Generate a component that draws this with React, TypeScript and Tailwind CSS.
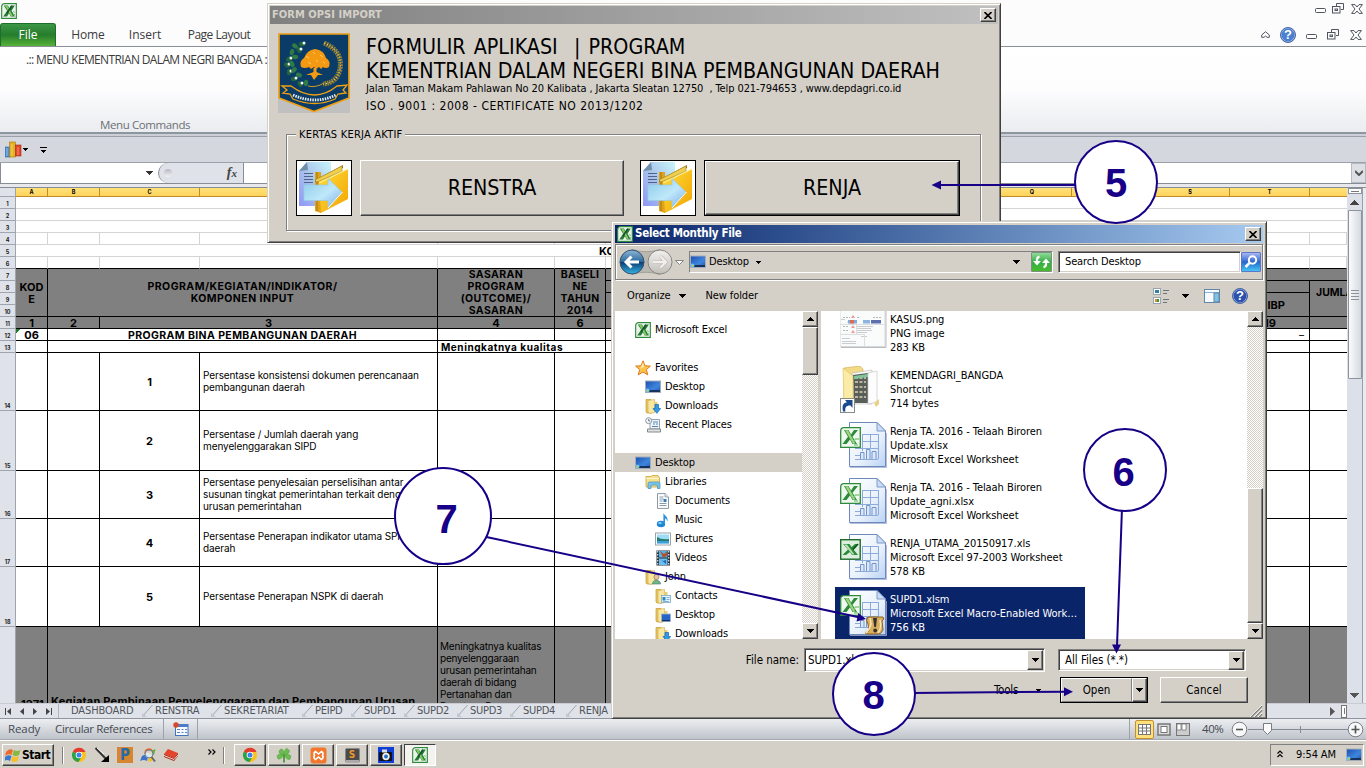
import React from "react";

const TA = "font-['DejaVu_Sans_Condensed','DejaVu_Sans',sans-serif] [font-stretch:condensed]";
const SEG = "font-['Open_Sans','Noto_Sans',sans-serif]";
const CELL = "border-r border-b border-black overflow-hidden";
const RAISED = "border border-t-white border-l-white border-r-[#404040] border-b-[#404040] shadow-[inset_-1px_-1px_0_#808080] bg-[#d4d0c8]";
const SUNKEN = "border border-t-[#808080] border-l-[#808080] border-r-white border-b-white shadow-[inset_1px_1px_0_#404040,inset_-1px_-1px_0_#d4d0c8] bg-white";
const CHECK = "bg-[repeating-conic-gradient(#ffffff_0_25%,#d4d0c8_0_50%)] bg-[length:2px_2px]";

function Tri({ dir = "down", w = 7, color = "#000", className = "" }: { dir?: "down" | "up" | "left" | "right"; w?: number; color?: string; className?: string }) {
  const h = Math.ceil(w / 2);
  if (dir === "down" || dir === "up")
    return (
      <svg width={w} height={h} className={`shrink-0 ${className}`} shapeRendering="crispEdges">
        <path d={dir === "down" ? `M0 0H${w}L${w / 2} ${h}Z` : `M0 ${h}H${w}L${w / 2} 0Z`} fill={color} />
      </svg>
    );
  return (
    <svg width={h} height={w} className={`shrink-0 ${className}`}>
      <path d={dir === "left" ? `M${h} 0V${w}L0 ${w / 2}Z` : `M0 0V${w}L${h} ${w / 2}Z`} fill={color} />
    </svg>
  );
}

function ExcelIcon({ size = 16 }: { size?: number }) {
  return (
    <svg width={size} height={size} viewBox="0 0 16 16" className="shrink-0">
      <path d="M3.500 .7H15.300V15.300H.7V3.500C.7 2 2 .7 3.500 .7Z" fill="#fff" stroke="#2f8a3c" strokeWidth="1.200" />
      <path d="M2 4.200C2 2.800 2.800 2 4.200 2H14V14H2Z" fill="#e9f4e7" />
      <path d="M2.800 2.500H7L8.500 5.500 10.200 2.500H13.800L10.500 7.800 14 13.500H9.700L8 10.200 6 13.500H2.200L6.200 7.800Z" fill="#27783a" />
      <path d="M4 2.800H6.600L12 13.200H9.900Z" fill="#86cb62" />
      <path d="M10.800 2.800L6 10" stroke="#12552a" strokeWidth="1.600" />
      <path d="M12 8.500l2 1M12.500 11.500h1.500" stroke="#7cc67a" />
    </svg>
  );
}

function DesktopIcon() {
  return (
    <svg width="16" height="16" viewBox="0 0 16 16" className="shrink-0">
      <defs>
        <linearGradient id="dsk" x1="0" y1="0" x2="1" y2="1">
          <stop offset="0" stopColor="#1b4fb0" />
          <stop offset=".6" stopColor="#3f86dd" />
          <stop offset="1" stopColor="#1d57b5" />
        </linearGradient>
      </defs>
      <rect x=".5" y="2" width="15" height="11.500" fill="url(#dsk)" stroke="#a3acb8" />
      <rect x="1" y="11" width="14" height="2" fill="#18325f" />
      <circle cx="2.500" cy="11.500" r="2" fill="#5ec5ee" />
      <rect x="2" y="11" width="1.500" height="1.500" fill="#f5b72a" />
    </svg>
  );
}

function FolderBase({ children }: { children?: React.ReactNode }) {
  return (
    <svg width="16" height="16" viewBox="0 0 16 16" className="shrink-0">
      <path d="M1 1.500H6L7 3V15H2L1 14Z" fill="#e9c865" stroke="#c49a36" strokeWidth=".7" />
      <path d="M3 2.500L9.500 1.500V14.500L5 15.500 3 14Z" fill="#f8e7a0" stroke="#d0a94a" strokeWidth=".6" />
      <path d="M10 4h2.500v10H10z" fill="#e8cc77" />
      {children}
    </svg>
  );
}

function TreeIcon({ kind }: { kind: string }) {
  if (kind === "excel") return <ExcelIcon />;
  if (kind === "desktop") return <DesktopIcon />;
  if (kind === "star")
    return (
      <svg width="16" height="16" viewBox="0 0 16 16" className="shrink-0">
        <path d="M8 .8L10 5.800 15.400 6.100 11.300 9.600 12.800 14.900 8 12 3.200 14.900 4.700 9.600 .6 6.100 6 5.800Z" fill="#fbc34a" stroke="#e07a1c" />
        <path d="M8 2.500L9.300 6.500 5 9Z" fill="#fdeba8" />
      </svg>
    );
  if (kind === "downloads")
    return (
      <FolderBase>
        <path d="M10 6.500h3.500V10.500H15.700L11.800 15.300 8 10.500H10Z" fill="#2f9be8" stroke="#1466b5" strokeWidth=".7" />
      </FolderBase>
    );
  if (kind === "dfolder")
    return (
      <FolderBase>
        <rect x="6.500" y="7" width="9" height="7.500" fill="#2563c4" stroke="#9eb4d0" strokeWidth=".8" />
        <path d="M7 13h8v1.200H7z" fill="#12305f" />
      </FolderBase>
    );
  if (kind === "contacts")
    return (
      <FolderBase>
        <rect x="6.500" y="7.500" width="9" height="7" fill="#e9f6ff" stroke="#79aac8" strokeWidth=".8" />
        <rect x="7.500" y="9" width="3" height="3.500" fill="#3187bd" />
        <path d="M11.500 9.500h3M11.500 11.500h3M8 13.500h6" stroke="#5ea0c8" strokeWidth=".8" />
      </FolderBase>
    );
  if (kind === "user")
    return (
      <FolderBase>
        <circle cx="11.500" cy="8" r="2.600" fill="#e6c3a0" stroke="#8d6b4d" strokeWidth=".6" />
        <path d="M7.500 15c0-5 8-5 8 0z" fill="#6fb58d" stroke="#3f7d60" strokeWidth=".6" />
      </FolderBase>
    );
  if (kind === "recent")
    return (
      <svg width="16" height="16" viewBox="0 0 16 16" className="shrink-0">
        <path d="M5 2.500H14.500V12H5Z" fill="#eef4f8" stroke="#8fa3b0" />
        <path d="M8 5h5M8 7h2M11 7h2M7 9.500h6" stroke="#5685b0" />
        <path d="M2.500 12H15.500V15H2.500Z" fill="#dfe3e6" stroke="#85898c" />
        <circle cx="3.700" cy="3.700" r="3" fill="#f5f8fa" stroke="#8a97a3" />
        <path d="M3.700 2v2h1.500" stroke="#557" fill="none" strokeWidth=".8" />
      </svg>
    );
  if (kind === "lib")
    return (
      <svg width="16" height="16" viewBox="0 0 16 16" className="shrink-0">
        <path d="M1 2.500H6L7 1.500H13L14.500 4V13H1Z" fill="#f4df8e" stroke="#c9a23e" strokeWidth=".8" />
        <path d="M1 4.500H14" stroke="#fff6cf" />
        <path d="M3 14.500V9.500Q3 8 4.500 8H13.500Q15 8 15 9.500V14.500H12.500V12Q12.500 11 11 11H7.500Q6 11 6 12V14.500Z" fill="#79c4ea" stroke="#3f8fc0" strokeWidth=".7" />
      </svg>
    );
  if (kind === "doc")
    return (
      <svg width="16" height="16" viewBox="0 0 16 16" className="shrink-0">
        <path d="M2.500 .6H10L13.500 4V15.400H2.500Z" fill="#fff" stroke="#8c97a2" />
        <path d="M10 .6V4H13.500" fill="#d9e6f2" stroke="#8c97a2" strokeWidth=".8" />
        <path d="M4.500 4h4M4.500 6h4M4.500 8h3M4.500 10.500h7M4.500 12.500h7" stroke="#8499ad" />
        <path d="M8.500 6h3v3h-3z" fill="#2f7cc0" />
      </svg>
    );
  if (kind === "music")
    return (
      <svg width="16" height="16" viewBox="0 0 16 16" className="shrink-0">
        <ellipse cx="6" cy="12" rx="4.200" ry="3.300" fill="#1f87d4" />
        <path d="M8.400 12V.8C9 4 14 4.500 12.300 10 12 6.500 10 6.500 10 6.500V12Z" fill="#2a93dd" />
        <ellipse cx="5" cy="11" rx="1.800" ry="1.100" fill="#8fd2fa" />
      </svg>
    );
  if (kind === "pic")
    return (
      <svg width="16" height="16" viewBox="0 0 16 16" className="shrink-0">
        <rect x=".5" y="2" width="15" height="12" fill="#fff" stroke="#98a2ac" />
        <rect x="2" y="3.500" width="12" height="9" fill="#9edbf5" />
        <path d="M2 6Q6 9 14 8V10H2Z" fill="#257a70" />
        <path d="M2 10H14V12.500H2Z" fill="#3c9fd8" />
      </svg>
    );
  return (
    <svg width="16" height="16" viewBox="0 0 16 16" className="shrink-0">
      <rect x="1.500" y=".5" width="13.500" height="15" fill="#2a3138" />
      <rect x="4" y="1" width="8.500" height="6.500" fill="#4eb4ea" />
      <rect x="4" y="8.500" width="8.500" height="6.500" fill="#68bff0" />
      <path d="M5 1l4 3 3-3v5l-4 1.500z" fill="#b9502a" />
      <path d="M5 9l3 2 3-1v4z" fill="#2667b1" />
      <path d="M2.700 1v14M13.700 1v14" stroke="#dfe5ea" strokeWidth="1.200" strokeDasharray="1.500 1.500" />
    </svg>
  );
}

function FileIcon({ kind }: { kind: string }) {
  if (kind === "png")
    return (
      <svg width="50" height="46" viewBox="0 0 50 46" className="shrink-0">
        <path d="M0 0H45V36.500H0Z" fill="#fafbfb" stroke="#d7d9db" />
        <path d="M1 37.500H46V1" fill="none" stroke="#b9bcbf" />
        <path d="M3 7.500h7M3 16.500h6M3 20.500h6M17 7.500h3M33 7.500h8" stroke="#b3b8c0" strokeDasharray="2 1" />
        <path d="M1 9.500h4M7 12h6M17 16.500h16M17 18.500h14M17 20.500h15M17 22.500h10M2 28.500h8M21 26.500h6M2 31.500h14M2 33.500h14" stroke="#c9ccd1" />
        <rect x="8" y="10" width="9" height="3.500" fill="#79aede" />
        <rect x="10" y="10" width="4" height="3.500" fill="#e4694c" />
        <rect x="23" y="10" width="7" height="3.500" fill="#8db4dc" />
        <rect x="31" y="10" width="10" height="3.500" fill="#5d6fae" />
        <path d="M11 8l2-3 2 3zM11 18l2-3 2 3zM11 23l2-3 2 3z" fill="#ef9a95" />
        <path d="M0 14.500H45M0 24.500H24M24.500 24V36M16.500 14V24" stroke="#dcdee0" />
      </svg>
    );
  if (kind === "shortcut")
    return (
      <svg width="50" height="50" viewBox="0 0 50 50" className="shrink-0">
        <path d="M4 2L20 0L23 3V32L4 36Z" fill="#f2da86" stroke="#d3b159" strokeWidth=".7" />
        <path d="M12 7L32 4V38H14Z" fill="#f6f6f4" stroke="#b9b9b4" strokeWidth=".6" />
        <path d="M13 9L28 7V37H14Z" fill="#575f58" />
        <path d="M15 12h11M15 16h11M15 21h11M15 26h11M15 31h11" stroke="#bfb3a0" strokeWidth="2.200" strokeDasharray="3 1.500" />
        <path d="M14 10L28 8V11L14 13Z" fill="#7fc59a" />
        <path d="M28 7L37 5V36L28 38Z" fill="#fdfdfd" stroke="#c7c9c9" strokeWidth=".7" />
        <path d="M34 37L39 33V38L36 41Z" fill="#ead086" />
        <path d="M3 2L13 10V46L4 38Z" fill="#faeba6" stroke="#dcbf68" strokeWidth=".6" />
        <rect x=".5" y="32.500" width="14" height="14" fill="#fff" stroke="#8a8a8a" />
        <path d="M3 45.500C1.500 38.500 4 36.500 7 36.500L5 34H12.500V42L10.500 39.500C7 39 4.500 41 5.500 45.500Z" fill="#1a4a8b" />
      </svg>
    );
  return (
    <svg width="50" height="50" viewBox="0 0 50 50" className="shrink-0">
      <defs>
        <linearGradient id="pg" x1="0" y1="0" x2="1" y2="1">
          <stop offset="0" stopColor="#ffffff" />
          <stop offset=".6" stopColor="#e8f0fb" />
          <stop offset="1" stopColor="#b9d2f4" />
        </linearGradient>
      </defs>
      <path d="M9.500 .5H37L45.500 9V44.500H9.500Z" fill="url(#pg)" stroke="#6f88bb" />
      <path d="M10 45.500H46.500V11" fill="none" stroke="#9fb0cf" strokeWidth=".8" />
      <path d="M37 .5V9H45.500Z" fill="#c9dcf5" stroke="#6f88bb" strokeWidth=".8" />
      <path d="M22 12.500H38M22 19.500H38M15 26.500H38M15 33.500H20M22.500 12V29M30.500 12V26M38.500 12V37M15 37.500H38" stroke="#8cabdb" fill="none" />
      <path d="M20.500 37V30.500H24V37M26.500 37V27.500H30V37M32 37V29.500H36V37" fill="#dbe8fa" stroke="#7294cc" />
      {kind === "xls" ? (
        <g>
          <rect x=".7" y="5.700" width="19.500" height="19.500" fill="#dcefdc" stroke="#1d6b2b" strokeWidth="1.400" />
          <path d="M3 10H9.500L11.500 13 15 10H18.500L13.500 15.500 18 21H12L10 18 6 21H2.500L8 15.500Z" fill="#2c8a3c" />
          <path d="M4 10.500L12.500 20.500H14.500L7 10.500Z" fill="#b9e0b2" />
          <path d="M18 10L13 15.500" stroke="#0f4c1c" strokeWidth="1.500" />
        </g>
      ) : (
        <g>
          <path d="M4 5.700H20.300V25.300H.7V9C.7 7 2 5.700 4 5.700Z" fill="#eff8ee" stroke="#2e8b3d" strokeWidth="1.300" />
          <path d="M4 8H8.500L11 12.500 14 8H18L12.500 14.800 17 22H12.500L10 17.500 6.500 22H2.500L8 14.800Z" fill="#2b8a3b" />
          <path d="M5 8.300H8L15.500 21.700H13Z" fill="#9dd47e" />
          <path d="M13.500 20l2-3h3.500M14 23h4" stroke="#88c987" strokeWidth="1.300" fill="none" />
        </g>
      )}
      {kind === "xlsm" && (
        <g>
          <path d="M28 27H43Q45 29 42 31L43 40Q41 45 37 44H26Q25 41 29 41L28 34Q25 30 28 27Z" fill="#d9ae60" stroke="#8e6424" />
          <path d="M26 43Q30 39 31 34L30 28M38 43Q42 38 40 30" stroke="#fbe7b2" strokeWidth="1.500" fill="none" />
          <path d="M33 28H37L36 37H34.300Z" fill="#35322e" />
          <circle cx="35.200" cy="40.500" r="1.900" fill="#35322e" />
        </g>
      )}
    </svg>
  );
}

function ImportPicture() {
  return (
    <div className="w-[56px] h-[56px] border border-black bg-white shrink-0">
      <svg width="54" height="54" viewBox="0 0 54 54">
        <defs>
          <linearGradient id="pa" x1="1" y1="0" x2="0" y2="1">
            <stop offset="0" stopColor="#c8f5fb" />
            <stop offset=".5" stopColor="#a9c4ec" />
            <stop offset="1" stopColor="#8f97f5" />
          </linearGradient>
          <linearGradient id="ar" x1="0" y1="0" x2="1" y2="1">
            <stop offset="0" stopColor="#8ccbe8" />
            <stop offset=".55" stopColor="#bfe8fa" />
            <stop offset="1" stopColor="#7cabe6" />
          </linearGradient>
          <linearGradient id="fo" x1="0" y1="0" x2="1" y2="1">
            <stop offset="0" stopColor="#ffdf3c" />
            <stop offset="1" stopColor="#f2a200" />
          </linearGradient>
        </defs>
        <path d="M10 1H34V45H2V10Z" fill="url(#pa)" />
        <path d="M2 10L10 1L11 9Z" fill="#6d8fa8" />
        <path d="M7 12.500H16M7 15.500H16M7 18.500H16M7 21.500H16" stroke="#4e6585" />
        <path d="M18 11H24V52L18 50Z" fill="#e0a21a" />
        <path d="M20 11V50" stroke="#a87608" />
        <path d="M22 20L51 8V38L24 52Z" fill="url(#fo)" />
        <path d="M18 19L46 4V7L18 21Z" fill="#8f7426" />
        <path d="M18 19L45 5V10L20 21Z" fill="#f0cf4d" stroke="#a98a2c" strokeWidth=".6" />
        <path d="M22 22L51 8" stroke="#fff1a0" strokeWidth="1" />
        <path d="M7 24H31V17.500L45 31 31 47V39.500H7Z" fill="url(#ar)" stroke="#97cbe8" strokeWidth=".7" />
        <path d="M31 47L45.500 31" stroke="#fff" strokeWidth=".9" />
      </svg>
    </div>
  );
}

const LEAVES = [[24, 11], [17, 13], [21, 17], [14, 19], [11, 26], [17, 24], [9, 32], [14, 31], [11, 39], [16, 37], [16, 46], [21, 42], [22, 51], [28, 50]];

function Logo() {
  return (
    <div className="w-[72px] h-[80px] bg-[#c0c0c0] shrink-0">
      <svg width="72" height="80" viewBox="0 0 72 80">
        <path d="M1 1H71V65L36 78.500L1 65Z" fill="#0b3c68" stroke="#f0a011" strokeWidth="1.700" />
        {LEAVES.map(([x, y], i) => (
          <g key={i}>
            <ellipse cx={x} cy={y} rx="3.200" ry="2.200" fill={i % 2 ? "#2f7a45" : "#24663c"} transform={`rotate(${i * 35} ${x} ${y})`} />
            {i % 2 === 0 && <circle cx={x + 2} cy={y - 1} r="1.500" fill="#f2f6f2" />}
          </g>
        ))}
        <path d="M46 10Q65 18 62 36Q59 50 45 51" fill="none" stroke="#94802f" strokeWidth="5" strokeDasharray="1.800 .8" />
        <path d="M46 10Q65 18 62 36Q59 50 45 51" fill="none" stroke="#e8cf78" strokeWidth="1.200" strokeDasharray="1 2" />
        <path d="M30 53Q38 55 46 50" fill="none" stroke="#c99a26" />
        <path d="M23 34Q21 28 26 25Q29 17 37 16Q46 17 48 25Q53 28 51 34Q48 36 45 34L43 36 41 34 38 36 36 34 33 36 31 34Q27 36 23 34Z" fill="#f49a12" />
        <path d="M28 23l3 2M35 19l2 2M42 22l3 2M30 29l3 2M38 27l2 2M45 29l2 1" stroke="#ffc862" strokeWidth="1" />
        <path d="M35.500 35V39L28 42 33 42 36 47 40 42 45 42 38.500 39V35Z" fill="#f49a12" />
        <path d="M4 53L13 53Q37 71 59 53L69 52 65 57 68 60 60 61 57 66Q37 75 15 66L12 61 5 60 9 57Z" fill="#0b3c68" stroke="#f0a011" strokeWidth="1.300" />
        <path d="M15 62Q37 72 58 62" fill="none" stroke="#e6ebf0" strokeWidth="2.800" strokeDasharray="1.500 1" />
      </svg>
    </div>
  );
}

function CloseBtn() {
  return (
    <div className={`${RAISED} w-[16px] h-[14px] flex items-center justify-center shrink-0`}>
      <svg width="8" height="7" viewBox="0 0 8 7">
        <path d="M.5 0L7.500 7M7.500 0L.5 7" stroke="#000" strokeWidth="1.600" />
      </svg>
    </div>
  );
}

function WinControls({ className }: { className: string }) {
  return (
    <div className={`flex items-center ${className}`}>
      <svg width="11" height="5" className="mt-[3px]"><rect x=".5" y=".5" width="10" height="4" rx="1" fill="#fff" stroke="#50545e" /></svg>
      <svg width="13" height="11" className="shrink-0" fill="none" stroke="#50545e">
        <path d="M4.500 3V.5H11.500V6.500H9" />
        <rect x=".5" y="3.500" width="7.500" height="6.500" />
        <rect x="3" y="6" width="2.500" height="1.500" />
      </svg>
      <svg width="12" height="10" className="shrink-0">
        <path d="M.6 .6H4L6 3 8 .6H11.400L8 5 11.400 9.400H8L6 7 4 9.400H.6L4 5Z" fill="#fff" stroke="#50545e" />
      </svg>
    </div>
  );
}

function Help({ dark = false }: { dark?: boolean }) {
  return (
    <div className={`${dark ? "bg-[#2c50ae]" : "bg-[#4a80cf]"} w-[16px] h-[16px] text-[13px] rounded-full border border-[#4a66a4] shadow-[inset_0_0_0_0.500px_#b9c9e6] text-white font-bold flex items-center justify-center leading-none font-['Liberation_Sans',sans-serif]`}>?</div>
  );
}

function TopBars() {
  return (
    <>
      <div className="h-[23px] bg-[#fcfcfc] flex items-start justify-between pl-[1px] pt-[3px]">
        <ExcelIcon size={16} />
        <WinControls className="gap-[6px] pr-[3px]" />
      </div>
      <div className={`h-[24px] bg-[#fcfcfc] border-b border-[#8b9097] flex text-[12px] text-[#3b3b3b] ${SEG}`}>
        <div className="w-[56px] h-[23px] rounded-t-[3px] border border-[#1f6d2b] border-b-0 bg-gradient-to-b from-[#3c9745] via-[#257c2c] to-[#56b337] text-white flex items-center justify-center">File</div>
        <div className="w-[64px] flex items-center justify-center tracking-[-0.1px]">Home</div>
        <div className="w-[50px] flex items-center justify-center">Insert</div>
        <div className="w-[98px] flex items-center justify-center tracking-[-0.500px]">Page Layout</div>
        <div className="flex-1 flex items-center justify-end gap-[10px] pr-[4px]">
          <svg width="9" height="7"><path d="M.7 4L4.500 .7 8.300 4V6.300H6L4.500 5 3 6.300H.7Z" fill="#fff" stroke="#50545e" /></svg>
          <Help />
          <WinControls className="gap-[10px]" />
        </div>
      </div>
      <div className={`h-[85px] bg-gradient-to-b from-white via-[#fdfdfe] to-[#eaecef] flex flex-col justify-between ${SEG} text-[12px]`}>
        <div className="pl-[26px] pt-[4px] leading-[18px] text-[#3b3b3b] whitespace-nowrap tracking-[-0.640px]">.:: MENU KEMENTRIAN DALAM NEGRI BANGDA :</div>
        <div className="pl-[100px] leading-[15px] text-[11.500px] tracking-[-0.400px] text-[#6c7077]">Menu Commands</div>
      </div>
      <div className="h-[5px] bg-[#ccd0d6] border-t-2 border-b border-t-[#8c969f] border-b-[#9aa0aa]" />
      <div className="h-[25px] bg-[#d4d7dd] flex items-center pl-[5px]">
        <svg width="17" height="17" viewBox="0 0 17 17">
          <rect x="0" y="6" width="5" height="10" fill="#4b8ed6" stroke="#2c65a8" strokeWidth=".6" />
          <rect x="4.500" y="1" width="6" height="15" fill="#e3b11f" stroke="#a67a10" strokeWidth=".6" />
          <rect x="10.500" y="4" width="5.500" height="11" fill="#e4482a" stroke="#a52b14" strokeWidth=".6" />
          <path d="M2 7v8M7 3v12M13 6v8" stroke="#fff" strokeOpacity=".4" />
        </svg>
        <Tri w={5} className="ml-[1px]" />
        <div className="ml-[12px] flex flex-col items-center gap-[2px]">
          <div className="w-[7px] h-px bg-black" />
          <Tri w={5} />
        </div>
      </div>
      <div className="h-[22px] bg-white border-t border-b border-t-[#9aa1ab] border-b-[#868d97] flex">
        <div className="w-[158px] border-l border-[#868d97] flex items-center justify-end pr-[5px]"><Tri w={7} color="#333" /></div>
        <div className="w-[86px] bg-[#dfe2e8] rounded-l-[11px] border-l border-r border-[#868d97] flex items-center justify-between pl-[5px] pr-[6px]">
          <div className="w-[8px] h-[8px] rounded-full bg-gradient-to-b from-[#b5b9c0] to-[#f2f3f5]" />
          <span className="font-['Liberation_Serif',serif] italic font-bold text-[14px] leading-none text-[#444]">f<span className="text-[11px]">x</span></span>
        </div>
        <div className="flex-1" />
        <div className="w-[15px] bg-[#dcdfe4] border border-[#b5bac2] flex items-center justify-center">
          <svg width="8" height="6"><path d="M0 1L4 5 8 1" stroke="#555" strokeWidth="2" fill="none" /></svg>
        </div>
      </div>
      <div className="h-[4px] bg-[#e7e9ed] border-b border-[#868d97]" />
    </>
  );
}

const NUMS = [
  "row-start-2", "row-start-3", "row-start-4", "row-start-5", "row-start-6", "row-start-7", "row-start-8", "row-start-9", "row-start-10", "row-start-11",
  "row-start-12", "row-start-13", "row-start-14", "row-start-15", "row-start-16", "row-start-17", "row-start-18", "row-start-19",
];
const COLS = ["col-start-2", "col-start-3", "col-start-4", "col-start-5", "col-start-6", "col-start-7", "col-start-8", "col-start-9"];
const ITEMS = [
  { row: "row-start-15", n: "1", t: ["Persentase konsistensi dokumen perencanaan", "pembangunan daerah"] },
  { row: "row-start-16", n: "2", t: ["Persentase / Jumlah daerah yang", "menyelenggarakan SIPD"] },
  { row: "row-start-17", n: "3", t: ["Persentase penyelesaian perselisihan antar", "susunan tingkat pemerintahan terkait dengan", "urusan pemerintahan"] },
  { row: "row-start-18", n: "4", t: ["Persentase Penerapan indikator utama SPM", "daerah"] },
  { row: "row-start-19", n: "5", t: ["Persentase Penerapan NSPK di daerah"] },
];
const G = "bg-[#808080] flex items-center justify-center text-center";
const GL = "border-[#d4d4d4] border-b";
const HEAD = "row-start-1 bg-gradient-to-b from-[#ffe27a] to-[#ffd35a] border-b border-[#c08a2e]";

function Sheet() {
  return (
    <div className="h-[515px] flex bg-[#dfe2e8]">
      <div className="w-[1347px] overflow-hidden grid bg-white text-black text-[10px] leading-[12px] font-['Inter',sans-serif] grid-cols-[16px_32px_52px_100px_238px_117px_51px_704px_37px] grid-rows-[9px_12px_12px_12px_12px_12px_12px_12px_12px_12px_12px_12px_12px_12px_58px_60px_48px_48px_60px_76px]">
        <div className="bg-[#dfe2e8] border-r border-b border-[#9fa5ae]" />
        {["A", "B", "C", "", "", ""].map((c, i) => (
          <div key={i} className={`${HEAD} ${COLS[i]} border-r flex items-center justify-center text-[5.500px] leading-[8px] font-bold`}>{c}</div>
        ))}
        <div className={`${HEAD} col-start-8 border-r flex justify-end text-[5.500px] leading-[8px] font-bold`}>
          {["Q", "", "S", "T"].map((c, i) => (
            <div key={i} className={`${i === 3 ? "w-[79px]" : "w-[79px] border-r border-[#c08a2e]"} shrink-0 flex items-center justify-center`}>{c}</div>
          ))}
        </div>
        <div className={`${HEAD} col-start-9`} />
        {NUMS.map((r, i) => (
          <div key={r} className={`${r} col-start-1 bg-[#dfe2e8] border-r border-b border-[#9fa5ae] flex items-end justify-center text-[5.500px] leading-[8px] font-bold text-[#222]`}>{i + 1}</div>
        ))}
        <div className="row-start-20 col-start-1 bg-[#dfe2e8] border-r border-[#9fa5ae]" />
        <div className={`row-start-2 col-start-2 col-span-8 ${GL}`} />
        <div className={`row-start-3 col-start-2 col-span-8 ${GL}`} />
        <div className={`row-start-4 col-start-2 col-span-8 ${GL}`} />
        {COLS.map((c) => <div key={c} className={`row-start-5 ${c} ${GL} border-r`} />)}
        <div className={`row-start-6 col-start-2 col-span-8 ${GL} pl-[583px] font-bold text-[11px] leading-[13px]`}>KO</div>
        {COLS.map((c) => <div key={c} className={`row-start-7 ${c} border-b border-b-black border-r border-r-[#d4d4d4]`} />)}

        <div className={`row-start-8 row-span-4 col-start-2 ${CELL} ${G} font-bold text-[11px]`}>KOD<br />E</div>
        <div className={`row-start-8 row-span-4 col-start-3 col-span-3 ${CELL} ${G} font-bold text-[10.500px] tracking-[0.460px]`}><span>PROGRAM/KEGIATAN/INDIKATOR/<br />KOMPONEN INPUT</span></div>
        <div className={`row-start-8 row-span-4 col-start-6 ${CELL} ${G} font-bold text-[10.500px] tracking-[0.400px]`}>SASARAN<br />PROGRAM<br />(OUTCOME)/<br />SASARAN</div>
        <div className={`row-start-8 row-span-4 col-start-7 ${CELL} ${G} font-bold text-[10.500px] tracking-[0.300px]`}>BASELI<br />NE<br />TAHUN<br />2014</div>
        <div className="row-start-8 col-start-8 col-span-2 bg-[#808080] border-b border-black" />
        <div className={`row-start-9 col-start-8 ${CELL} bg-[#808080]`} />
        <div className={`row-start-10 row-span-2 col-start-8 ${CELL} bg-[#808080] font-bold text-[11px] flex items-center justify-end pr-[24px]`}>IBP</div>
        <div className="row-start-9 row-span-3 col-start-9 bg-[#808080] border-b border-black overflow-hidden font-bold text-[10.500px] pl-[6px] pt-[6px]">JUMLA</div>
        {["1", "2", "3", "4", "6", "19", ""].map((n, i) => {
          const pos = ["col-start-2", "col-start-3", "col-start-4 col-span-2", "col-start-6", "col-start-7", "col-start-8", "col-start-9"][i];
          return <div key={i} className={`row-start-12 ${pos} ${i === 6 ? "border-b border-black" : CELL} bg-[#808080] font-bold text-[11px] leading-[13px] ${i === 5 ? "text-right pr-[33px]" : "text-center"}`}>{n}</div>;
        })}
        <div className={`row-start-13 col-start-2 ${CELL} bg-[linear-gradient(135deg,#1a7f2e_3.500px,transparent_3.500px)] font-bold text-[11px] leading-[13px] text-center`}>06</div>
        <div className={`row-start-13 col-start-3 col-span-3 ${CELL} font-bold text-[10.500px] leading-[13px] tracking-[0.400px] text-center`}>PROGRAM BINA PEMBANGUNAN DAERAH</div>
        <div className={`row-start-13 col-start-6 ${CELL}`} />
        <div className={`row-start-13 col-start-7 ${CELL}`} />
        <div className={`row-start-13 col-start-8 ${CELL} text-right pr-[5px]`}>–</div>
        <div className="row-start-13 col-start-9 border-b border-black" />
        <div className={`row-start-14 col-start-2 ${CELL}`} />
        <div className={`row-start-14 col-start-3 col-span-3 ${CELL}`} />
        <div className={`row-start-14 col-start-6 col-span-2 ${CELL} font-bold pl-[3px] leading-[13px] tracking-[0.550px]`}>Meningkatnya kualitas</div>
        <div className={`row-start-14 col-start-8 ${CELL}`} />
        <div className="row-start-14 col-start-9 border-b border-black" />
        {ITEMS.map((it) => (
          <React.Fragment key={it.n}>
            <div className={`${it.row} col-start-2 ${CELL}`} />
            <div className={`${it.row} col-start-3 ${CELL}`} />
            <div className={`${it.row} col-start-4 ${CELL} flex items-center justify-center font-bold text-[11px]`}>{it.n}</div>
            <div className={`${it.row} col-start-5 ${CELL} flex flex-col justify-center pl-[3px] pb-px whitespace-nowrap text-[10px] tracking-[-0.100px]`}>{it.t.map((l) => <div key={l}>{l}</div>)}</div>
            <div className={`${it.row} col-start-6 ${CELL}`} />
            <div className={`${it.row} col-start-7 ${CELL}`} />
            <div className={`${it.row} col-start-8 ${CELL}`} />
            <div className={`${it.row} col-start-9 border-b border-black`} />
          </React.Fragment>
        ))}
        <div className="row-start-20 col-start-2 bg-[#808080] border-r border-black overflow-hidden font-bold text-[11px] pt-[71px] pl-[5px]">1271</div>
        <div className="row-start-20 col-start-3 col-span-3 bg-[#808080] border-r border-black overflow-hidden whitespace-nowrap font-bold text-[11px] tracking-[0.230px] pt-[68px] pl-[3px]">Kegiatan Pembinaan Penyelenggaraan dan Pembangunan Urusan</div>
        <div className="row-start-20 col-start-6 bg-[#808080] border-r border-black overflow-hidden whitespace-nowrap pt-[13px] pl-[2px] tracking-[-0.200px]">Meningkatnya kualitas<br />penyelenggaraan<br />urusan pemerintahan<br />daerah di bidang<br />Pertanahan dan<br />Penataan Ruang</div>
        <div className="row-start-20 col-start-7 bg-[#808080] border-r border-black" />
        <div className="row-start-20 col-start-8 bg-[#808080] border-r border-black" />
        <div className="row-start-20 col-start-9 bg-[#808080]" />
      </div>
      <div className="w-[16px] border-r border-[#9aa0aa] flex flex-col items-center bg-[#dce0e8]">
        <div className="w-[14px] h-[6px] border border-[#8d939d] bg-white flex items-center justify-center shrink-0"><div className="w-[8px] h-px bg-[#777]" /></div>
        <div className="h-[16px] flex items-center shrink-0"><Tri dir="up" w={9} color="#444" /></div>
        <div className="w-[14px] h-[169px] border border-[#8d939d] rounded-[1px] bg-gradient-to-r from-[#fbfbfc] to-[#d5d9df] flex flex-col items-center justify-center gap-[2px] shrink-0">
          {[0, 1, 2, 3].map((i) => <div key={i} className="w-[8px] h-px bg-[#8d939d] shrink-0" />)}
        </div>
        <div className="flex-1" />
        <Tri dir="down" w={9} color="#555" className="mb-[5px]" />
      </div>
      <div className="w-[3px] bg-[#e9ebee]" />
    </div>
  );
}

const TABS: [string, string][] = [["DASHBOARD", "w-[84px]"], ["RENSTRA", "w-[69px]"], ["SEKRETARIAT", "w-[91px]"], ["PEIPD", "w-[49px]"], ["SUPD1", "w-[53px]"], ["SUPD2", "w-[53px]"], ["SUPD3", "w-[53px]"], ["SUPD4", "w-[56px]"], ["RENJA", "w-[60px]"]];

function SheetTabs() {
  return (
    <div className={`h-[16px] bg-[#dfe2e8] border-b border-[#8f959f] border-t border-t-[#c9ccd2] flex ${TA} text-[11px] text-[#50545b]`}>
      <div className="w-[59px] border-r border-[#b0b5be] flex items-center gap-[8px] pl-[5px]">
        <svg width="7" height="7"><path d="M.5 0V7" stroke="#444" /><path d="M6 0V7L2 3.500Z" fill="#444" /></svg>
        <Tri dir="left" w={7} color="#444" />
        <Tri dir="right" w={7} color="#444" className="ml-[1px]" />
        <svg width="7" height="7"><path d="M6.500 0V7" stroke="#444" /><path d="M1 0V7L5 3.500Z" fill="#444" /></svg>
      </div>
      <div className="flex pl-[12px]">
        {TABS.map(([t, w], i) => (
          <div key={t} className={`${w} flex items-center justify-between leading-[14px] ${i === 2 || i === 0 ? "tracking-[-0.100px]" : "tracking-[-0.250px]"}`}>
            <span>{t}</span>
            {i < 8 && <svg width="11" height="14" className="mr-[2px] shrink-0"><path d="M0 13L10.500 1" stroke="#9fa5ae" /><path d="M0 9V13H5Z" fill="#c3c7ce" /></svg>}
          </div>
        ))}
      </div>
      <div className="flex-1 flex items-center justify-end pr-[19px] gap-[6px]">
        <Tri dir="right" w={9} color="#555" />
        <div className="w-[6px] h-[13px] border border-[#777] bg-white flex items-center justify-center"><div className="w-px h-[6px] bg-[#777]" /></div>
      </div>
    </div>
  );
}

function StatusBar() {
  return (
    <div className={`h-[21px] bg-gradient-to-b from-[#eceef1] to-[#bfc4cb] border-b border-[#a5aab2] flex items-center ${SEG} text-[11.500px] text-[#454a52]`}>
      <div className="w-[55px] pl-[8px] tracking-[-0.1px]">Ready</div>
      <div className="w-[108px] whitespace-nowrap tracking-[-0.350px]">Circular References</div>
      <div className="w-[35px] h-full border-l border-r border-[#9ca2ab] flex items-center justify-center">
        <svg width="16" height="14" viewBox="0 0 16 14">
          <rect x="2.500" y="2.500" width="12.500" height="11" fill="#f5faff" stroke="#4572b8" />
          <path d="M2 2H15V5H2Z" fill="#4a7cc9" />
          <path d="M4 7.500h3M8.500 7.500h2M12 7.500h2M4 10.500h3M8.500 10.500h2M12 10.500h2" stroke="#5b86c5" />
          <circle cx="3" cy="3" r="2.700" fill="#d8472b" />
        </svg>
      </div>
      <div className="flex-1" />
      <div className="h-full border-l border-[#9ca2ab] flex items-center pl-[5px] gap-[3px]">
        <div className="w-[19px] h-[19px] rounded-[2px] border border-[#c2902e] bg-[#ffe07a] flex items-center justify-center">
          <svg width="13" height="11"><rect x=".5" y=".5" width="12" height="10" fill="#fff" stroke="#777" /><path d="M1 4H12M1 7H12M4.500 1V10M8.500 1V10" stroke="#777" /></svg>
        </div>
        <svg width="14" height="13"><rect x="1" y="1" width="12" height="11" fill="#ddd" stroke="#777" strokeWidth="1.500" /><rect x="4" y="3.500" width="6" height="6" fill="#fff" stroke="#777" /></svg>
        <svg width="14" height="13" className="ml-[2px]"><rect x=".5" y=".5" width="13" height="12" fill="#ccc" stroke="#777" /><path d="M1 1h4v6H1zM6 1h4v6H6z" fill="#fff" stroke="#777" strokeWidth=".8" /></svg>
        <span className="ml-[9px] w-[26px] tracking-[-0.4px]">40%</span>
        <svg width="135" height="17">
          <path d="M17 8.500H120M69.500 5V12" stroke="#858b94" />
          <circle cx="8.500" cy="8.500" r="7.300" fill="#f7f8f9" stroke="#777c84" />
          <path d="M5 8.500H12" stroke="#555" strokeWidth="1.600" />
          <path d="M32.500 2.500H40.500V9.500L36.500 13.500 32.500 9.500Z" fill="#fafafa" stroke="#777c84" />
          <circle cx="124.500" cy="8.500" r="7.300" fill="#f7f8f9" stroke="#777c84" />
          <path d="M120.500 8.500H128.500M124.500 4.500V12.500" stroke="#555" strokeWidth="1.700" />
        </svg>
      </div>
    </div>
  );
}

function Chrome() {
  return (
    <svg width="16" height="16" viewBox="0 0 16 16" className="shrink-0">
      <circle cx="8" cy="8" r="7" fill="#fbc116" />
      <path d="M8 8L1.900 4.500A7 7 0 0 1 14.500 5H8Z" fill="#e33b2e" />
      <path d="M8 8L1.900 4.500A7 7 0 0 0 7.500 15L10.500 10Z" fill="#2ca14a" />
      <circle cx="8" cy="8" r="3.300" fill="#fff" />
      <circle cx="8" cy="8" r="2.500" fill="#3f82e8" />
    </svg>
  );
}

function Task({ children, active = false }: { children: React.ReactNode; active?: boolean }) {
  return (
    <div className={`w-[32px] h-[22px] flex items-center justify-center ${active ? "border border-[#404040] border-r-white border-b-white bg-[#f4f3f0]" : RAISED}`}>{children}</div>
  );
}

function Taskbar() {
  return (
    <div className={`h-[28px] bg-[#d4d0c8] border-t border-white flex items-center ${TA} text-[11px] text-black pt-[1px]`}>
      <div className={`${RAISED} ml-[2px] w-[52px] h-[22px] flex items-center gap-[1px] pl-[2px] font-bold text-[12px] tracking-[-0.500px]`}>
        <svg width="16" height="15" viewBox="0 0 16 15" className="shrink-0">
          <path d="M1 4Q4 0 8 2L6.500 7Q3.500 5 0 8Z" fill="#ef6b2d" />
          <path d="M9 2Q12 4 15.500 2L14 7Q11 9 7.500 7Z" fill="#85b93b" />
          <path d="M0 9Q3 6 6.500 8L5 13Q2 11 -1 13Z" fill="#3a78d0" />
          <path d="M7.500 8Q10 10 14 8L12.500 13Q9 15 6 13Z" fill="#f6bf2b" />
        </svg>
        Start
      </div>
      <div className="ml-[8px] w-[2px] h-[17px] border-l border-[#808080] border-r border-r-white" />
      <div className="ml-[7px] flex items-center gap-[7px]">
        <Chrome />
        <svg width="16" height="16"><path d="M1.500 1L13 13" stroke="#333" strokeWidth="2" /><path d="M3 1L10 7" stroke="#fff" strokeWidth=".8" /><path d="M15 8V15H7Z" fill="#000" /></svg>
        <div className="w-[16px] h-[16px] bg-[#d88532] text-[#246ba8] font-bold text-[15px] leading-[16px] text-center">P</div>
        <svg width="16" height="16">
          <path d="M5 3Q8 0 12 2L11 7Q8 5 4 7Z" fill="#e26b2a" /><path d="M12 3Q14 3 15.500 2L14 8H11Z" fill="#6aaa35" /><path d="M2 9Q5 7 8 9L7 14Q4 12 0 14Z" fill="#3a73c9" /><path d="M9 9L13 9 12 14Q9 15 7.500 14Z" fill="#f2c035" />
          <circle cx="9" cy="7" r="4" fill="#dff1fb" fillOpacity=".75" stroke="#68809a" /><path d="M11.500 10L15 14.500" stroke="#666" strokeWidth="2" />
        </svg>
        <svg width="16" height="16"><path d="M1 7L5 2 15 6 11 11Z" fill="#e2452c" /><path d="M1 7L11 11 15 6V9L11 14 1 10Z" fill="#a92413" /><path d="M1 8.500L11 12.500 15 8" stroke="#f7d9cf" fill="none" /></svg>
      </div>
      <svg width="8" height="6" className="ml-[29px] mb-[7px]"><path d="M.5 .5L3 3 .5 5.500M4.500 .5L7 3 4.500 5.500" stroke="#000" fill="none" strokeWidth="1.200" /></svg>
      <div className="ml-[7px] w-[2px] h-[17px] border-l border-[#808080] border-r border-r-white" />
      <div className="ml-[9px] flex gap-[2px]">
        <Task><Chrome /></Task>
        <Task><svg width="16" height="16"><g fill="#6cbb50" stroke="#4d9a3b" strokeWidth=".5"><path d="M8 8C3 8 2 4 4 3C5 1 8 2 8 8Z" /><path d="M8 8C8 2 11 0 12 2.500C15 3 13 8 8 8Z" /><path d="M8 8C3 6 0 8 1.500 10C1 13 5 13 8 8Z" /><path d="M8 8C13 6.500 16 8.500 14.500 10.500C15 13 11 14 8 8Z" /></g><path d="M8 8L8 15.500" stroke="#4b9a36" strokeWidth="1.800" /></svg></Task>
        <Task><svg width="17" height="17"><rect x=".5" y=".5" width="16" height="16" rx="3" fill="#f2762b" /><path d="M8.500 7L5.500 4.500Q3 6 4.500 8.500Q3 11 5.500 12.500L8.500 10L11.500 12.500Q14 11 12.500 8.500Q14 6 11.500 4.500Z" fill="none" stroke="#fff" strokeWidth="1.600" /></svg></Task>
        <Task><div className="w-[15px] h-[15px] rounded-[2px] bg-[#4a4a48] border border-[#888] text-[#f0962c] font-bold text-[10px] leading-[11px] text-center border-b-[3px] border-b-[#aaa]">S</div></Task>
        <Task><svg width="16" height="16"><rect width="16" height="16" fill="#103fd8" /><rect x="1" y="5" width="13" height="9" rx="1" fill="#111" /><rect x="4" y="2.500" width="5" height="3" fill="#ddd" /><circle cx="8" cy="9.500" r="3.700" fill="#eee" /><circle cx="8" cy="9.500" r="2" fill="#2570c9" /></svg></Task>
        <Task active><ExcelIcon /></Task>
      </div>
      <div className="flex-1" />
      <div className="w-[94px] h-[22px] mr-[2px] border border-t-[#808080] border-l-[#808080] border-r-white border-b-white flex items-center pl-[6px]">
        <svg width="6" height="8" className="mb-[3px]"><path d="M.5 3.500L3 1 5.500 3.500M.5 7L3 4.500 5.500 7" stroke="#000" fill="none" strokeWidth="1.200" /></svg>
        <span className="ml-[13px] w-[50px] whitespace-nowrap tracking-[-0.100px]">9:54 AM</span>
        <DesktopIcon />
      </div>
    </div>
  );
}

function FormWindow() {
  return (
    <div className={`absolute left-[267px] top-[3px] w-[734px] h-[240px] bg-[#d4d0c8] border border-[#d4d0c8] border-r-[#404040] border-b-[#404040] shadow-[inset_1px_1px_0_#fff,inset_-1px_-1px_0_#808080] ${TA} text-black px-[2px] pt-[2px]`}>
      <div className="h-[18px] bg-gradient-to-r from-[#808080] to-[#c0c0c0] flex items-center justify-between pl-[2px] pr-[2px] text-[#d4d0c8] font-bold text-[11px] tracking-[0.050px]">
        FORM OPSI IMPORT
        <CloseBtn />
      </div>
      <div className="flex pl-[8px] pt-[9px]">
        <Logo />
        <div className="pl-[16px] whitespace-nowrap flex flex-col">
          <div className="text-[21.300px] leading-[24px] h-[24px] [word-spacing:2px] whitespace-pre mt-[2px]">FORMULIR APLIKASI  | PROGRAM</div>
          <div className="text-[21.300px] leading-[24px] h-[24px]">KEMENTRIAN DALAM NEGERI BINA PEMBANGUNAN DAERAH</div>
          <div className="text-[11px] leading-[12px] tracking-[-0.095px] whitespace-pre">Jalan Taman Makam Pahlawan No 20 Kalibata , Jakarta Sleatan 12750  , Telp 021-794653 , www.depdagri.co.id</div>
          <div className="text-[12px] leading-[14px] mt-[4px] tracking-[0.520px]">ISO . 9001 : 2008 - CERTIFICATE NO 2013/1202</div>
        </div>
      </div>
      <div className="relative ml-[16px] mt-[21px] w-[695px] h-[97px] border border-[#808080] shadow-[inset_1px_1px_0_#fff,1px_1px_0_#fff]">
        <span className="absolute left-[9px] top-[-8px] bg-[#d4d0c8] px-[3px] text-[11px] leading-[15px] tracking-[0.220px]">KERTAS KERJA AKTIF</span>
        <div className="flex pl-[9px] pt-[25px]">
          <ImportPicture />
          <div className={`${RAISED} ml-[8px] w-[264px] h-[56px] flex items-center justify-center text-[21.300px] tracking-[-0.100px]`}>RENSTRA</div>
          <div className="w-[16px]" />
          <ImportPicture />
          <div className="ml-[8px] w-[256px] h-[56px] border border-black flex">
            <div className={`${RAISED} flex-1 flex items-center justify-center text-[21.300px] tracking-[0px]`}>RENJA</div>
          </div>
        </div>
      </div>
    </div>
  );
}

function WinScroll({ top, thumb }: { top: string; thumb: string }) {
  return (
    <div className={`w-[16px] h-full flex flex-col shrink-0 ${CHECK}`}>
      <div className={`${RAISED} h-[16px] shrink-0 flex items-center justify-center`}><Tri dir="up" w={7} /></div>
      <div className={`${top} shrink-0`} />
      <div className={`${RAISED} ${thumb} shrink-0`} />
      <div className="flex-1" />
      <div className={`${RAISED} h-[16px] shrink-0 flex items-center justify-center`}><Tri w={7} /></div>
    </div>
  );
}

const TREE: [string, string, string][] = [
  ["excel", "Microsoft Excel", "pl-[20px]"], ["", "", ""], ["star", "Favorites", "pl-[20px]"], ["desktop", "Desktop", "pl-[30px]"], ["downloads", "Downloads", "pl-[30px]"],
  ["recent", "Recent Places", "pl-[30px]"], ["", "", ""], ["desktop", "Desktop", "pl-[20px] bg-[#d4d0c8]"], ["lib", "Libraries", "pl-[30px]"], ["doc", "Documents", "pl-[40px]"],
  ["music", "Music", "pl-[40px]"], ["pic", "Pictures", "pl-[40px]"], ["video", "Videos", "pl-[40px]"], ["user", "John", "pl-[30px]"], ["contacts", "Contacts", "pl-[40px]"],
  ["dfolder", "Desktop", "pl-[40px]"], ["downloads", "Downloads", "pl-[40px]"],
];
const FILES: [string, string[]][] = [
  ["png", ["KASUS.png", "PNG image", "283 KB"]],
  ["shortcut", ["KEMENDAGRI_BANGDA", "Shortcut", "714 bytes"]],
  ["xlsx", ["Renja TA. 2016 - Telaah Biroren", "Update.xlsx", "Microsoft Excel Worksheet"]],
  ["xlsx", ["Renja TA. 2016 - Telaah Biroren", "Update_agni.xlsx", "Microsoft Excel Worksheet"]],
  ["xls", ["RENJA_UTAMA_20150917.xls", "Microsoft Excel 97-2003 Worksheet", "578 KB"]],
  ["xlsm", ["SUPD1.xlsm", "Microsoft Excel Macro-Enabled Work…", "756 KB"]],
];

function OpenDialog() {
  return (
    <div className={`absolute left-[611px] top-[221px] w-[656px] h-[498px] bg-[#d4d0c8] border border-[#d4d0c8] border-r-[#404040] border-b-[#404040] shadow-[inset_1px_1px_0_#fff,inset_-1px_-1px_0_#808080] ${TA} text-black text-[11px] tracking-[-0.150px] p-[3px] flex flex-col`}>
      <div className="h-[18px] bg-gradient-to-r from-[#0a246a] to-[#a6caf0] flex items-center gap-[2px] pl-[2px] pr-[2px] text-white font-bold text-[11.500px] tracking-[-0.280px] shrink-0">
        <ExcelIcon />
        <span className="flex-1">Select Monthly File</span>
        <CloseBtn />
      </div>
      <div className="mt-[1px] h-[36px] border border-[#808080] shadow-[inset_1px_1px_0_#fff,1px_1px_0_#fff] flex items-center shrink-0 pl-[3px]">
        <svg width="70" height="30" viewBox="0 0 70 30" className="shrink-0">
          <defs>
            <linearGradient id="bk" x1="0" y1="0" x2="0" y2="1"><stop offset="0" stopColor="#8fb7d6" /><stop offset=".48" stopColor="#2d6a9e" /><stop offset=".52" stopColor="#0c3f75" /><stop offset="1" stopColor="#35b4e6" /></linearGradient>
            <linearGradient id="fw" x1="0" y1="0" x2="0" y2="1"><stop offset="0" stopColor="#f1f0ee" /><stop offset="1" stopColor="#c2bfba" /></linearGradient>
          </defs>
          <path d="M13 2.500Q27 7 41 2.500V27.500Q27 23 13 27.500Z" fill="#bab7b1" stroke="#999690" strokeWidth=".8" />
          <circle cx="13" cy="15" r="12" fill="url(#bk)" stroke="#35506b" />
          <circle cx="41" cy="15" r="12" fill="url(#fw)" stroke="#8a8883" />
          <path d="M20 15H7M12.500 9.500L7 15L12.500 20.500" stroke="#fff" strokeWidth="3" fill="none" />
          <path d="M34 15H47M41.500 9.500L47 15L41.500 20.500" stroke="#b9b6b0" strokeWidth="3.600" fill="none" />
          <path d="M34 15H47M41.500 9.500L47 15L41.500 20.500" stroke="#f2f0ed" strokeWidth="2.400" fill="none" />
          <path d="M56.500 13.500H64.500L60.500 17.500Z" fill="#fff" stroke="#7c7974" strokeWidth=".9" />
        </svg>
        <div className="w-[364px] h-[22px] border border-t-[#808080] border-l-[#808080] border-r-white border-b-white flex items-center gap-[3px] shrink-0">
          <DesktopIcon />
          <span>Desktop</span>
          <Tri w={5} className="ml-[4px]" />
          <div className="flex-1" />
          <Tri w={7} className="mr-[8px]" />
          <div className="w-[21px] h-[20px] border border-[#7d8f80] rounded-[1px] bg-gradient-to-b from-[#8ddb98] via-[#33ad45] to-[#46bd2a] flex items-center justify-center shrink-0">
            <svg width="17" height="14"><path d="M6.500 1.500Q3.500 2.500 4 6" stroke="#fff" strokeWidth="2.200" fill="none" /><path d="M0 6H8L4 10.500Z" fill="#fff" /><path d="M10.500 12.500Q13.500 11.500 13 8" stroke="#fff" strokeWidth="2.200" fill="none" /><path d="M9 8H17L13 3.500Z" fill="#fff" /></svg>
          </div>
        </div>
        <div className={`${SUNKEN} ml-[5px] w-[183px] h-[22px] flex items-center pl-[6px] shrink-0`}><span className="pt-px">Search Desktop</span></div>
        <div className="w-[20px] h-[20px] border border-[#5c76c9] rounded-[1px] bg-gradient-to-b from-[#a8b5f3] via-[#2a67cc] to-[#44c5f3] flex items-center justify-center shrink-0">
          <svg width="14" height="14"><circle cx="8.500" cy="5" r="3.700" fill="none" stroke="#fff" strokeWidth="2" /><path d="M5.500 8L1.500 12" stroke="#fff" strokeWidth="2.500" /></svg>
        </div>
      </div>
      <div className="h-[31px] flex items-center pl-[12px] shrink-0">
        <span className="pt-px tracking-[-0.100px]">Organize</span>
        <Tri w={7} className="ml-[8px]" />
        <span className="pt-px ml-[20px] tracking-[-0.100px]">New folder</span>
        <div className="flex-1" />
        <svg width="16" height="16">
          <rect x=".5" y=".5" width="7" height="6" fill="#fff" stroke="#98a4b0" /><rect x="2" y="2" width="4" height="3" fill="#2f7fa5" />
          <rect x=".5" y="9.500" width="7" height="6" fill="#fff" stroke="#98a4b0" /><rect x="2" y="11" width="2" height="3" fill="#d83" /><rect x="4" y="11" width="2" height="3" fill="#393" />
          <path d="M10 2.500H16M10 5.500H14M10 11.500H16M10 14.500H14" stroke="#6d747c" />
        </svg>
        <Tri w={7} className="ml-[13px]" />
        <svg width="16" height="14" className="ml-[15px]"><rect x=".5" y=".5" width="15" height="13" fill="#f6fbff" stroke="#6286a8" /><path d="M1 3.500H15" stroke="#8fb0cc" /><rect x="10" y="4" width="5" height="9" fill="#7cc3e4" stroke="#6286a8" /></svg>
        <div className="ml-[12px] mr-[15px]"><Help dark /></div>
      </div>
      <div className="h-[328px] flex shrink-0">
        <div className="w-[187px] bg-white pt-[9px] overflow-hidden">
          {TREE.map(([k, t, p], i) => (
            <div key={i} className={`h-[19px] flex items-center gap-[4px] ${p}`}>{k && <TreeIcon kind={k} />}<span className="pt-[2px]">{t}</span></div>
          ))}
        </div>
        <WinScroll top="h-0" thumb="h-[48px]" />
        <div className="w-[3px]" />
        <div className="flex-1 bg-white overflow-hidden pl-[14px]">
          <div className="mt-[-4px]">
            {FILES.map(([k, l], i) => (
              <div key={i} className={`h-[56px] w-[250px] flex pl-[5px] pt-[3px] tracking-[-0.060px] ${i === 5 ? "bg-[#0a246a] text-white" : ""}`}>
                <FileIcon kind={k} />
                <div className="pt-[3px] leading-[14px] whitespace-nowrap">{l.map((x) => <div key={x}>{x}</div>)}</div>
              </div>
            ))}
          </div>
        </div>
        <WinScroll top="h-[161px]" thumb="h-[135px]" />
      </div>
      <div className="flex items-center mt-[9px] h-[24px] shrink-0 text-[11.500px]">
        <span className="w-[189px] text-right pr-[5px] pt-px tracking-[-0.020px]">File name:</span>
        <div className={`${SUNKEN} w-[241px] h-[24px] flex items-center pl-[3px] pr-[1px]`}>
          <span className="flex-1 pt-px">SUPD1.xlsm</span>
          <div className={`${RAISED} w-[16px] h-[20px] flex items-center justify-center`}><Tri w={7} /></div>
        </div>
        <div className={`${SUNKEN} ml-[13px] w-[188px] h-[22px] flex items-center pl-[6px] pr-[1px]`}>
          <span className="flex-1 pt-px tracking-[-0.050px]">All Files (*.*)</span>
          <div className={`${RAISED} w-[16px] h-[19px] flex items-center justify-center`}><Tri w={7} /></div>
        </div>
      </div>
      <div className="flex items-center mt-[5px] h-[26px] shrink-0 text-[11.500px] pl-[379px]">
        <span className="pt-[2px] w-[26px] tracking-[-0.250px]">Tools</span>
        <Tri w={5} className="ml-[16px] mr-[19px]" />
        <div className="w-[88px] h-[26px] border border-black flex shrink-0">
          <div className="flex-1 border-t border-l border-white border-b border-b-[#808080] border-r border-r-[#808080] flex items-center justify-center pt-px tracking-[0px]">Open</div>
          <div className={`${RAISED} w-[15px] flex items-center justify-center`}><Tri w={7} /></div>
        </div>
        <div className={`${RAISED} ml-[12px] w-[88px] h-[26px] flex items-center justify-center pt-px tracking-[0.100px] shrink-0`}>Cancel</div>
      </div>
      <svg width="13" height="13" className="ml-auto mt-[2px] shrink-0">
        <path d="M1 12L12 1M5 12L12 5M9 12L12 9" stroke="#808080" strokeWidth="1.700" />
        <path d="M0 12L12 0M4 12L12 4M8 12L12 8" stroke="#fff" strokeWidth=".8" />
      </svg>
    </div>
  );
}

function Callout({ n, box }: { n: string; box: string }) {
  return (
    <div className={`absolute ${box} rounded-full bg-white border-[2.500px] border-[#170087] flex items-center justify-center font-['Liberation_Sans',sans-serif] font-bold text-[40px] leading-none text-[#170087]`}>{n}</div>
  );
}

export default function App() {
  return (
    <div className="relative w-[1366px] h-[768px] overflow-hidden flex flex-col bg-white">
      <TopBars />
      <Sheet />
      <SheetTabs />
      <StatusBar />
      <Taskbar />
      <FormWindow />
      <OpenDialog />
      <svg width="1366" height="768" className="absolute left-0 top-0" stroke="#170087" fill="#170087" strokeWidth="2">
        <path d="M1080 185H938M1122 508L1117 646M484 536.500L860 617.500M912 693L1066 691.700" fill="none" />
        <path d="M931.500 185L941 180.500V189.500ZM1116.500 653.500L1112 644.500H1121ZM866 619L856.500 621.500L858.300 613ZM1073 691.700L1064 687.200V696.200Z" stroke="none" />
      </svg>
      <Callout n="5" box="left-[1074px] top-[140px] w-[84px] h-[84px] pt-[2px]" />
      <Callout n="6" box="left-[1083px] top-[428px] w-[84px] h-[84px] pt-[4px] pr-[3px]" />
      <Callout n="7" box="left-[394px] top-[467px] w-[98px] h-[98px] pl-[7px] pt-[6px]" />
      <Callout n="8" box="left-[832px] top-[652px] w-[84px] h-[84px] pt-[1px] pr-[1px]" />
    </div>
  );
}
